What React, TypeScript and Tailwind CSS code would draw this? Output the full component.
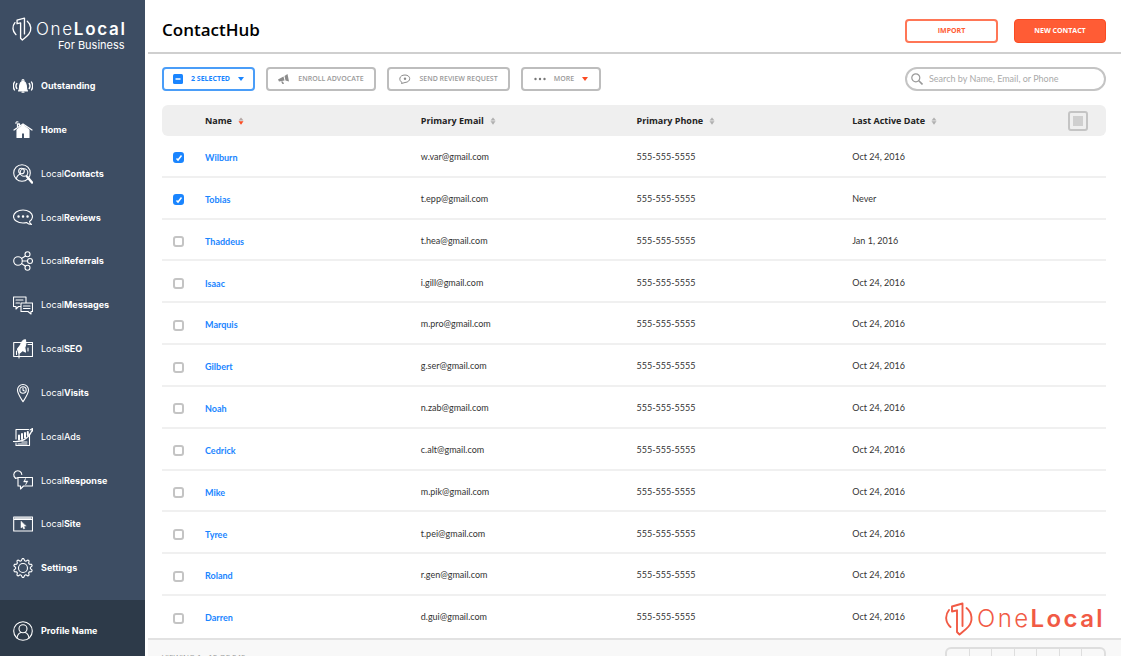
import React, { useState } from 'react';

type NavItem = { light?: string; bold: string; icon: React.ReactNode };

const BusinessMark = ({ className }: { className: string }) => (
  <svg viewBox="0 0 28 34" className={className} fill="none" stroke="currentColor" strokeWidth="1.9" strokeLinejoin="round" strokeLinecap="round">
    <path d="M4 8C0 13 0 20 5.500 25" />
    <path d="M17.500 24V1.500L7 4.500v5l5-1.200V30l2.500 2.500C18 29.500 21 27.500 23.500 24.500 28 19 27.500 11 21.500 6" />
  </svg>
);

const Icon = ({ children }: { children: React.ReactNode }) => (
  <svg viewBox="0 0 20 20" className="h-5 w-5 shrink-0" fill="none" stroke="currentColor" strokeWidth="1.1" strokeLinejoin="round" strokeLinecap="round">
    {children}
  </svg>
);

// ten teeth, four points each
const gearPoints = Array.from({ length: 40 }, (_, i) => {
  const radius = i % 4 < 2 ? 9.4 : 7.4;
  const angle = ((i - 0.5) * Math.PI) / 20 - Math.PI / 2;
  return `${(10 + radius * Math.cos(angle)).toFixed(2)},${(10 + radius * Math.sin(angle)).toFixed(2)}`;
}).join(' ');

const navItems: NavItem[] = [
  {
    bold: 'Outstanding',
    icon: (
      <Icon>
        <path d="M5.500 15h9c-1.500-2-.8-3.500-1.200-5.500C12.800 6.500 12 5.500 10 5.500S7.200 6.500 6.700 9.500C6.300 11.500 7 13 5.500 15ZM9 16.200h2" fill="currentColor" />
        <circle cx="10" cy="4.500" r="1" />
        <path d="M3.800 7.500c-1 1.500-1 3.500 0 5M1.500 6c-1.500 2.500-1.500 5.500 0 8M16.200 7.500c1 1.500 1 3.500 0 5M18.500 6c1.500 2.500 1.500 5.500 0 8" strokeWidth="1.400" />
      </Icon>
    ),
  },
  {
    bold: 'Home',
    icon: (
      <Icon>
        <path d="M4 10v7.500h4.500V13h3v4.500H16V10l-6-5Z" fill="currentColor" />
        <path d="M1 10 10 4l9 6M4.500 6.500V4h2v1.500" strokeWidth="1.300" />
        <path d="M3 3.500c-.5-1.500 1-2 2-1.500" />
      </Icon>
    ),
  },
  {
    light: 'Local',
    bold: 'Contacts',
    icon: (
      <Icon>
        <circle cx="9" cy="9" r="8.300" />
        <circle cx="8.500" cy="7" r="2.800" />
        <circle cx="11" cy="8.500" r="3.800" />
        <path d="M3.500 14.500c.5-2.800 2-4 4-4.500" />
        <path d="m14 12.500 5 6" strokeWidth="2.400" />
      </Icon>
    ),
  },
  {
    light: 'Local',
    bold: 'Reviews',
    icon: (
      <Icon>
        <path d="M16.500 14.500C18.500 13.300 19.500 11.500 19.500 9.500 19.500 6 15.500 3 10 3S.5 6 .5 9.500 4.500 16 10 16c1.300 0 2.500-.1 3.500-.5 1.500 1.500 3 2 5 2-1.200-.8-2-1.800-2-3Z" />
        <path d="M5.500 9.500h.1M10 9.500h.1M14.500 9.500h.1" strokeWidth="2.400" />
      </Icon>
    ),
  },
  {
    light: 'Local',
    bold: 'Referrals',
    icon: (
      <Icon>
        <circle cx="5" cy="10" r="4.300" />
        <circle cx="14.500" cy="3.300" r="2.500" />
        <circle cx="17" cy="10" r="2.500" />
        <circle cx="14.500" cy="16.800" r="2.500" />
        <path d="m8.500 7.500 4-2.500M9.300 10h5.200M8.500 12.500l4 2.800" />
      </Icon>
    ),
  },
  {
    light: 'Local',
    bold: 'Messages',
    icon: (
      <Icon>
        <path d="M7.500 11.500H5.500L3 14v-2.500H.5V2H13v5.500M3 5h7M3 8h3.500" />
        <path d="M8 8h11.500v8.500H18V19l-3-2.500H8ZM10.500 11H17M10.500 13.500H17" />
      </Icon>
    ),
  },
  {
    light: 'Local',
    bold: 'SEO',
    icon: (
      <Icon>
        <path d="M.7 3.500h18.800v14H.7ZM15 5.500h4.500" />
        <path d="M6 14.500 4.500 10 7.500 6C8.500 2.500 10.500.8 12.500.800c.7 2.500.5 5.200-.7 7.700L12.500 13l-3-1.500Z" fill="currentColor" />
        <path d="M3.500 12v3.500M6 15v4M15 9v3" />
      </Icon>
    ),
  },
  {
    light: 'Local',
    bold: 'Visits',
    icon: (
      <Icon>
        <path d="M10 18.700C7 14 4.500 10.500 4.500 7a5.500 5.500 0 0 1 11 0C15.500 10.500 13 14 10 18.700Z" />
        <circle cx="10" cy="7" r="3.200" />
        <path d="M10 5v2.200l1.300.8" />
      </Icon>
    ),
  },
  {
    light: 'Local',
    bold: 'Ads',
    icon: (
      <Icon>
        <path d="M3 12V2.500h12.500M16.500 7v11.500H3V16.500" />
        <path d="M6 12.500V8.500M9 12V7M12 10.500V6M14.800 8V5" strokeWidth="2" />
        <path d="M0 14.500c9 1 16-3 19.500-12M17 3l2.500-1.500.3 2.800M5 17h9M9 15h5" />
      </Icon>
    ),
  },
  {
    light: 'Local',
    bold: 'Response',
    icon: (
      <Icon>
        <path d="M5 7.500h14.500v8.500H10.500L7.500 19v-3H5ZM2.500 8A4 4 0 1 1 8.800 4.500M1 6.500l1.500 2L5 7.500" />
        <path d="m12.500 8.500-2 3.500h3l-1 3 2.500-4h-3Z" fill="currentColor" strokeWidth=".4" />
      </Icon>
    ),
  },
  {
    light: 'Local',
    bold: 'Site',
    icon: (
      <Icon>
        <path d="M.7 3h18.800v14H.7ZM.7 5.500h18.800M2 4.300h16" />
        <path d="M8 7.500v6.500l1.600-1.300 1 2.300 1.200-.6-1-2.200 2-.3Z" fill="currentColor" strokeWidth=".5" />
      </Icon>
    ),
  },
  {
    bold: 'Settings',
    icon: (
      <Icon>
        <circle cx="10" cy="10" r="4.500" />
        <polygon points={gearPoints} />
      </Icon>
    ),
  },
];

const contacts = [
  { name: 'Wilburn', email: 'w.var@gmail.com', date: 'Oct 24, 2016' },
  { name: 'Tobias', email: 't.epp@gmail.com', date: 'Never' },
  { name: 'Thaddeus', email: 't.hea@gmail.com', date: 'Jan 1, 2016' },
  { name: 'Isaac', email: 'i.gill@gmail.com', date: 'Oct 24, 2016' },
  { name: 'Marquis', email: 'm.pro@gmail.com', date: 'Oct 24, 2016' },
  { name: 'Gilbert', email: 'g.ser@gmail.com', date: 'Oct 24, 2016' },
  { name: 'Noah', email: 'n.zab@gmail.com', date: 'Oct 24, 2016' },
  { name: 'Cedrick', email: 'c.alt@gmail.com', date: 'Oct 24, 2016' },
  { name: 'Mike', email: 'm.pik@gmail.com', date: 'Oct 24, 2016' },
  { name: 'Tyree', email: 't.pei@gmail.com', date: 'Oct 24, 2016' },
  { name: 'Roland', email: 'r.gen@gmail.com', date: 'Oct 24, 2016' },
  { name: 'Darren', email: 'd.gui@gmail.com', date: 'Oct 24, 2016' },
];

const columns = ['Name', 'Primary Email', 'Primary Phone', 'Last Active Date'];

const SortArrows = ({ active }: { active: boolean }) => (
  <svg viewBox="0 0 6 8" className="h-2 w-1.5">
    <path d="M.5 3.500 3 .5l2.500 3Z" fill={active ? '#b5a8a5' : '#b0b0b0'} />
    <path d="M.5 4.300h5L3 7.700Z" fill={active ? '#fb4b22' : '#b0b0b0'} />
  </svg>
);

const Caret = () => (
  <svg viewBox="0 0 6 4" className="h-1 w-1.5 fill-current">
    <path d="M0 0h6L3 4Z" />
  </svg>
);

const Sidebar = () => (
  <aside className="flex w-[145px] shrink-0 flex-col bg-[#3d4d63] font-['Inter',sans-serif] text-white">
    <div className="flex h-16 items-start gap-1 pl-3 pt-[17px]">
      <BusinessMark className="h-6 w-5" />
      <div className="flex flex-col items-end">
        <p className="text-[17px] leading-6 tracking-widest"><span className="font-light">One</span><span className="font-semibold">Local</span></p>
        <p className="-mt-1 pr-0.5 text-[11px] leading-4">For Business</p>
      </div>
    </div>
    <nav className="flex flex-1 flex-col pb-2.5">
      {navItems.map(item => (
        <a key={item.bold} href="#" className="flex flex-1 items-center gap-2 pl-[13px] text-[9px]">
          {item.icon}
          <span>{item.light}<span className={item.bold === 'Ads' ? 'font-medium' : 'font-bold'}>{item.bold}</span></span>
        </a>
      ))}
    </nav>
    <a href="#" className="flex h-14 items-center gap-2 bg-[#2d3a49] pl-[13px] pt-1.5 text-[9px] font-bold">
      <Icon>
        <circle cx="10" cy="10" r="9.300" />
        <circle cx="10" cy="7.800" r="4" />
        <path d="M4 17c.5-3.500 2-5 4-5.500M16 17c-.5-3.500-2-5-4-5.500" />
      </Icon>
      Profile Name
    </a>
  </aside>
);

const toolButton = 'flex h-6 items-center justify-center gap-2 rounded-[4px] border-2 text-[7px]';

export default function App() {
  const [selected, setSelected] = useState(['Wilburn', 'Tobias']);

  const toggle = (name: string) =>
    setSelected(selected.includes(name) ? selected.filter(n => n !== name) : [...selected, name]);

  return (
    <div className="flex h-screen overflow-hidden bg-white font-['Open_Sans','Noto_Sans',sans-serif] text-[#222]">
      <Sidebar />
      <main className="relative ml-[3px] mr-[13px] flex min-w-0 flex-1 flex-col">
        <header className="flex h-[54px] shrink-0 items-center justify-between border-b-2 border-[#cfcfcf] pl-3.5 pr-[15px] pt-2">
          <h1 className="text-[17px] font-semibold text-black">ContactHub</h1>
          <div className="flex gap-4 pt-0.5 text-[7px] font-bold">
            <button className="h-6 w-[93px] rounded-[4px] border-2 border-[#ff7656] text-[#ff5c35]">IMPORT</button>
            <button className="h-6 w-[92px] rounded-[4px] border border-[#fb4b22] bg-[#ff5c35] text-white">NEW CONTACT</button>
          </div>
        </header>

        <div className="flex shrink-0 items-center gap-[11px] pb-3.5 pl-3.5 pr-[15px] pt-[13px] text-[#999]">
          <button className={`${toolButton} w-[93px] border-[#4a9df8] font-bold text-[#1a85ff]`}>
            <svg viewBox="0 0 10 10" className="h-2.5 w-2.5">
              <rect width="10" height="10" rx="1.500" fill="#1a85ff" />
              <path d="M2.500 5h5" stroke="#fff" strokeWidth="1.500" />
            </svg>
            2 SELECTED
            <Caret />
          </button>
          <button className={`${toolButton} w-[110px] border-[#bdbdbd] font-semibold`}>
            <svg viewBox="0 0 12 10" className="h-2.5 w-3 fill-[#8c8c8c]">
              <path d="M0 5.500 5.500 2.500l1 4L1 7.500ZM6.500 2 9.500 0l1.500 7.500-3.500-1ZM3 7.500h2L6 10H4.500Z" />
            </svg>
            ENROLL ADVOCATE
          </button>
          <button className={`${toolButton} w-[123px] border-[#bdbdbd] font-semibold`}>
            <svg viewBox="0 0 12 10" className="h-2.5 w-3" fill="none" stroke="#8c8c8c">
              <path d="M3 8.500C-.5 6.500 0 1 6 1s6.500 7 0 7.500L2.500 9.500Z" />
              <circle cx="6" cy="4.800" r="1.200" fill="#8c8c8c" stroke="none" />
            </svg>
            SEND REVIEW REQUEST
          </button>
          <button className={`${toolButton} w-20 border-[#bdbdbd] font-semibold`}>
            <svg viewBox="0 0 12 4" className="h-1 w-3 fill-[#777]">
              <circle cx="1.500" cy="2" r="1.200" />
              <circle cx="6" cy="2" r="1.200" />
              <circle cx="10.500" cy="2" r="1.200" />
            </svg>
            MORE
            <span className="text-[#fb4b22]"><Caret /></span>
          </button>
          <label className="ml-auto flex h-6 w-[201px] items-center gap-1.5 rounded-full border-2 border-[#c4c4c4] pl-1">
            <svg viewBox="0 0 12 12" className="h-3 w-3 shrink-0" fill="none" stroke="#999" strokeWidth="1.200">
              <circle cx="4.800" cy="4.800" r="4" />
              <path d="m7.800 7.800 3.700 3.700" strokeWidth="1.600" />
            </svg>
            <input
              type="search"
              aria-label="Search contacts"
              placeholder="Search by Name, Email, or Phone"
              className="w-full min-w-0 bg-transparent font-['Lato',sans-serif] text-[9px] text-[#444] outline-none placeholder:text-[#aaa]"
            />
          </label>
        </div>

        <div className="min-h-0 flex-1 border-b-2 border-[#e2e2e2] pl-3.5 pr-[15px]">
          <table className="h-full w-full table-fixed border-separate border-spacing-0 text-left">
            <thead>
              <tr className="h-[31px] bg-[#efefef] text-[9px]">
                <th className="w-[43px] rounded-l-md" />
                {columns.map((column, i) => (
                  <th key={column} className="p-0 font-bold">
                    <button className="flex items-center gap-1.5">{column} <SortArrows active={i === 0} /></button>
                  </th>
                ))}
                <th className="w-[38px] rounded-r-md p-0">
                  <button aria-label="Choose columns" className="flex h-5 w-5 items-center justify-center rounded-[3px] border-2 border-[#c4c4c4]">
                    <span className="h-2.5 w-2.5 bg-[#cfcfcf]" />
                  </button>
                </th>
              </tr>
            </thead>
            <tbody className="font-['Lato',sans-serif] text-[9px] text-[#333] [&>tr:last-child>td]:border-transparent [&>tr>td]:border-b-2 [&>tr>td]:border-[#f0f0f0] [&>tr>td]:px-0 [&>tr>td]:pb-0">
              {contacts.map(contact => (
                <tr key={contact.name}>
                  <td className="pt-0.5">
                    <input
                      type="checkbox"
                      id={contact.name}
                      checked={selected.includes(contact.name)}
                      onChange={() => toggle(contact.name)}
                      aria-label={`Select ${contact.name}`}
                      className="peer sr-only"
                    />
                    <label htmlFor={contact.name} className="ml-[11px] mt-0.5 flex h-[11px] w-[11px] items-center justify-center rounded-[3px] border-2 border-[#c4c4c4] bg-white text-white peer-checked:border-[#1a85ff] peer-checked:bg-[#1a85ff]">
                      <svg viewBox="0 0 8 8" className="h-2 w-2 shrink-0" fill="none" stroke="currentColor" strokeWidth="1.500">
                        <path d="m1.500 4.500 1.500 1.500 3.500-4.500" />
                      </svg>
                    </label>
                  </td>
                  <td className="pt-1"><a href="#" className="font-bold text-[#1a85ff]">{contact.name}</a></td>
                  <td className="pt-0.5">{contact.email}</td>
                  <td className="pt-0.5">555-555-5555</td>
                  <td className="pt-0.5">{contact.date}</td>
                  <td />
                </tr>
              ))}
            </tbody>
          </table>
        </div>

        <footer className="flex h-4 shrink-0 items-start justify-between bg-[#f8f8f8] pl-3.5 pr-[15px] pt-[7px] text-[#999]">
          <p className="pt-1 text-[8px] leading-3">VIEWING 1 - 12 OF 245</p>
          <div className="flex h-6 w-[161px] shrink-0 rounded-md border-2 border-[#dedede] text-[8px] text-[#1a85ff]">
            {['«', '‹', '1', '2', '…', '›', '»'].map(page => (
              <button key={page} className="flex-1 border-l border-[#dedede] pt-0.5 first:border-l-0">{page}</button>
            ))}
          </div>
        </footer>

        <div className="absolute bottom-5 right-4 flex items-center gap-1 font-['Inter',sans-serif] text-[#f15a45]">
          <BusinessMark className="h-[34px] w-7" />
          <p className="text-[24px] leading-8 tracking-widest"><span className="font-light">One</span><span className="font-semibold">Local</span></p>
        </div>
      </main>
    </div>
  );
}
